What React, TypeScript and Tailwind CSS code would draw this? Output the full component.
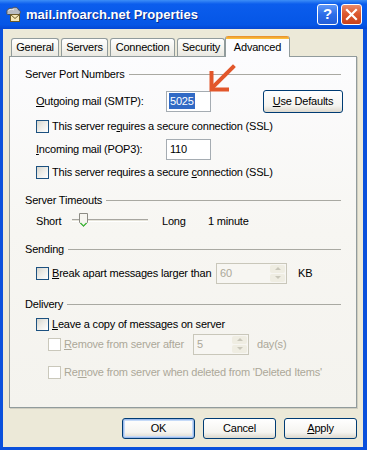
import React from "react";

function Check({ disabled }: { disabled?: boolean }) {
  return (
    <span
      className={
        disabled
          ? "block w-[13px] h-[13px] shrink-0 border border-[#CAC8BB] bg-white"
          : "block w-[13px] h-[13px] shrink-0 border border-[#1C5180] bg-[linear-gradient(135deg,#d6d5cd_0%,#ecebe6_45%,#ffffff_100%)]"
      }
    />
  );
}

function U({ children }: { children: React.ReactNode }) {
  return <span className="underline underline-offset-[1px] decoration-1">{children}</span>;
}

function GroupHeader({ title }: { title: string }) {
  return (
    <div className="flex h-[14px] items-center">
      <span>{title}</span>
      <span className="ml-[4px] h-px flex-1 bg-[#A9A9A2]" />
    </div>
  );
}

function Spinner() {
  return (
    <div className="ml-auto mr-px flex h-[17px] w-[15px] flex-col gap-px">
      <div className="flex flex-1 items-center justify-center rounded-[2px] bg-[#EFEDE2]">
        <span className="h-0 w-0 border-x-[3px] border-b-[3px] border-x-transparent border-b-[#C9C7BA]" />
      </div>
      <div className="flex flex-1 items-center justify-center rounded-[2px] bg-[#EFEDE2]">
        <span className="h-0 w-0 border-x-[3px] border-t-[3px] border-x-transparent border-t-[#C9C7BA]" />
      </div>
    </div>
  );
}

function Tab({ label, w }: { label: string; w: string }) {
  return (
    <div
      className={`${w} flex h-[18px] items-center justify-center rounded-t-[3px] border border-b-0 border-[#919B9C] bg-[linear-gradient(180deg,#ffffff_0%,#f3f2ed_60%,#e9e8e2_100%)]`}
    >
      {label}
    </div>
  );
}

function XPButton({ children, def }: { children: React.ReactNode; def?: boolean }) {
  return (
    <div
      className={
        "flex h-[21px] w-[73px] items-center justify-center rounded-[3px] border border-[#003C74] bg-[linear-gradient(180deg,#ffffff_0%,#f5f4f0_70%,#dcd8cd_100%)] " +
        (def ? "shadow-[inset_0_0_0_1px_#9DBBEB,inset_0_0_0_2px_#C5DAF8]" : "")
      }
    >
      {children}
    </div>
  );
}

export default function App() {
  return (
    <div className="relative flex h-[450px] w-[367px] flex-col whitespace-nowrap bg-[#0A50DC] font-['Liberation_Sans',Arial,sans-serif] text-[11px] tracking-[-0.2px] text-black">
      {/* title bar */}
      <div className="flex h-[29px] items-center bg-[linear-gradient(180deg,#3d8ef7_0%,#0b5ded_14%,#0556e6_85%,#0447d4_100%)] pl-[5px] pr-[5px]">
        <svg width="17" height="17" viewBox="0 0 17 17" className="shrink-0">
          <path d="M2 7 C1 4 4 1.5 7 2.5 C9 0.5 13 1 13.5 4 C16 4.5 16 8 13.5 8.5 L3 8.5 C2 8.5 1.5 8 2 7 Z" fill="#b9bcc2" stroke="#4a4f58" strokeWidth="1" />
          <path d="M3.5 4.5 C5 3 8 3 9 4" stroke="#e8eaee" strokeWidth="1" fill="none" />
          <rect x="5.5" y="8.5" width="9" height="7" fill="#f6e7b6" stroke="#6b5a2a" strokeWidth="1" />
          <path d="M5.5 8.5 L10 12.5 L14.5 8.5" stroke="#6b5a2a" strokeWidth="1" fill="none" />
        </svg>
        <span className="ml-[4px] text-[13px] font-bold tracking-normal text-white [text-shadow:1px_1px_0_#0a2a8a]">mail.infoarch.net Properties</span>
        <div className="ml-auto flex gap-[3px]">
          <div className="flex h-[21px] w-[21px] items-center justify-center rounded-[3px] border border-white bg-[linear-gradient(180deg,#5f97f6_0%,#2d6ee9_50%,#235ed8_100%)] text-[15px] font-bold text-white">
            ?
          </div>
          <div className="flex h-[21px] w-[21px] items-center justify-center rounded-[3px] border border-white bg-[linear-gradient(180deg,#ea8b6c_0%,#dd5a30_45%,#c9411b_100%)]">
            <svg width="13" height="13" viewBox="0 0 13 13">
              <path d="M2 2 L11 11 M11 2 L2 11" stroke="white" strokeWidth="2.2" strokeLinecap="square" />
            </svg>
          </div>
        </div>
      </div>

      {/* window body */}
      <div className="mb-[3px] ml-[3px] mr-[4px] flex flex-1 flex-col bg-[#ECE9D8]">
        {/* tabs */}
        <div className="relative z-10 mt-[7px] flex h-[20px] items-end pl-[8px]">
          <Tab label="General" w="w-[48px]" />
          <div className="w-[2px]" />
          <Tab label="Servers" w="w-[47px]" />
          <div className="w-[2px]" />
          <Tab label="Connection" w="w-[65px]" />
          <div className="w-[2px]" />
          <Tab label="Security" w="w-[48px]" />
          <div className="-mb-px flex h-[21px] w-[65px] flex-col rounded-t-[3px] border-x border-[#919B9C] bg-[#FCFCFE]">
            <div className="h-[3px] rounded-t-[2px] bg-[linear-gradient(180deg,#e68b2c_0%,#ffc73c_100%)]" />
            <div className="flex flex-1 items-center justify-center pb-[2px]">Advanced</div>
          </div>
        </div>

        {/* panel */}
        <div className="mx-[6px] flex h-[352px] flex-col border border-[#919B9C] bg-[linear-gradient(180deg,#fcfcfe_0%,#f7f6f2_50%,#f4f3ee_100%)] px-[15px] pt-[10px] shadow-[1px_1px_0_#d0cec1]">
          <GroupHeader title="Server Port Numbers" />
          <div className="mt-[8px] flex h-[24px] items-center pl-[11px]">
            <span className="w-[130px]">
              <U>O</U>utgoing mail (SMTP):
            </span>
            <div className="flex h-[21px] w-[45px] items-center border border-[#A5ACB2] bg-white pl-[2px]">
              <span className="bg-[#316AC5] px-px text-white">5025</span>
            </div>
            <div className="ml-[52px] -mr-[2px] flex h-[23px] w-[80px] items-center justify-center rounded-[3px] border border-[#003C74] bg-[linear-gradient(180deg,#ffffff_0%,#f5f4f0_70%,#dcd8cd_100%)]">
              <U>U</U>se Defaults
            </div>
          </div>
          <div className="mt-[6px] flex h-[14px] items-center gap-[3px] pl-[11px]">
            <Check />
            <span>
              This server re<U>q</U>uires a secure connection (SSL)
            </span>
          </div>
          <div className="mt-[6px] flex h-[20px] items-center pl-[11px]">
            <span className="w-[130px]">
              <U>I</U>ncoming mail (POP3):
            </span>
            <div className="flex h-[21px] w-[45px] items-center border border-[#A5ACB2] bg-white pl-[3px]">110</div>
          </div>
          <div className="mt-[6px] flex h-[14px] items-center gap-[3px] pl-[11px]">
            <Check />
            <span>
              This server requires a secure <U>c</U>onnection (SSL)
            </span>
          </div>

          <div className="mt-[14px]">
            <GroupHeader title="Server Timeouts" />
          </div>
          <div className="mt-[4px] flex h-[20px] items-center pl-[11px]">
            <span className="w-[36px]">Short</span>
            <div className="relative h-[20px] w-[76px]">
              <div className="absolute left-0 right-0 top-[8px] h-[3px] border-t border-[#A7A6A0] border-b border-b-white bg-[#E6E4DA]" />
              <svg width="9" height="15" viewBox="0 0 9 15" className="absolute left-[7px] top-[2px]">
                <path d="M0.5 0.5 H8.5 V9.5 L4.5 13.5 L0.5 9.5 Z" fill="#f6f5f0" stroke="#8c8b84" />
                <path d="M1.5 10 L4.5 13 L7.5 10" stroke="#3fbd3a" strokeWidth="1.2" fill="none" />
              </svg>
            </div>
            <span className="ml-[14px] w-[46px]">Long</span>
            <span>1 minute</span>
          </div>

          <div className="mt-[11px]">
            <GroupHeader title="Sending" />
          </div>
          <div className="mt-[7px] flex h-[20px] items-center pl-[11px]">
            <Check />
            <span className="ml-[3px] w-[164px]">
              <U>B</U>reak apart messages larger than
            </span>
            <div className="flex h-[21px] w-[71px] items-center border border-[#C9C7BA] bg-[#F7F6F2] pl-[3px] text-[#ACA899]">
              60
              <Spinner />
            </div>
            <span className="ml-[11px]">KB</span>
          </div>

          <div className="mt-[14px]">
            <GroupHeader title="Delivery" />
          </div>
          <div className="mt-[6px] flex h-[14px] items-center gap-[3px] pl-[11px]">
            <Check />
            <span>
              <U>L</U>eave a copy of messages on server
            </span>
          </div>
          <div className="mt-[3px] flex h-[20px] items-center pl-[23px] text-[#ACA899]">
            <Check disabled />
            <span className="ml-[3px] w-[129px]">
              <U>R</U>emove from server after
            </span>
            <div className="flex h-[21px] w-[56px] items-center border border-[#C9C7BA] bg-[#F7F6F2] pl-[3px]">
              5
              <Spinner />
            </div>
            <span className="ml-[8px]">day(s)</span>
          </div>
          <div className="mt-[11px] flex h-[14px] items-center gap-[3px] pl-[23px] text-[#ACA899]">
            <Check disabled />
            <span>
              Re<U>m</U>ove from server when deleted from 'Deleted Items'
            </span>
          </div>
        </div>

        {/* buttons */}
        <div className="mt-[10px] flex justify-end gap-[8px] pr-[6px]">
          <XPButton def>OK</XPButton>
          <XPButton>Cancel</XPButton>
          <XPButton>
            <U>A</U>pply
          </XPButton>
        </div>
      </div>

      {/* annotation arrow */}
      <svg width="367" height="450" className="pointer-events-none absolute left-0 top-0">
        <path d="M233 67 L213 87" stroke="#E2572B" strokeWidth="4" strokeLinecap="square" />
        <path d="M211.5 73 L211.5 89.5 L227 89.5" stroke="#E2572B" strokeWidth="4" strokeLinecap="square" fill="none" />
      </svg>
    </div>
  );
}
